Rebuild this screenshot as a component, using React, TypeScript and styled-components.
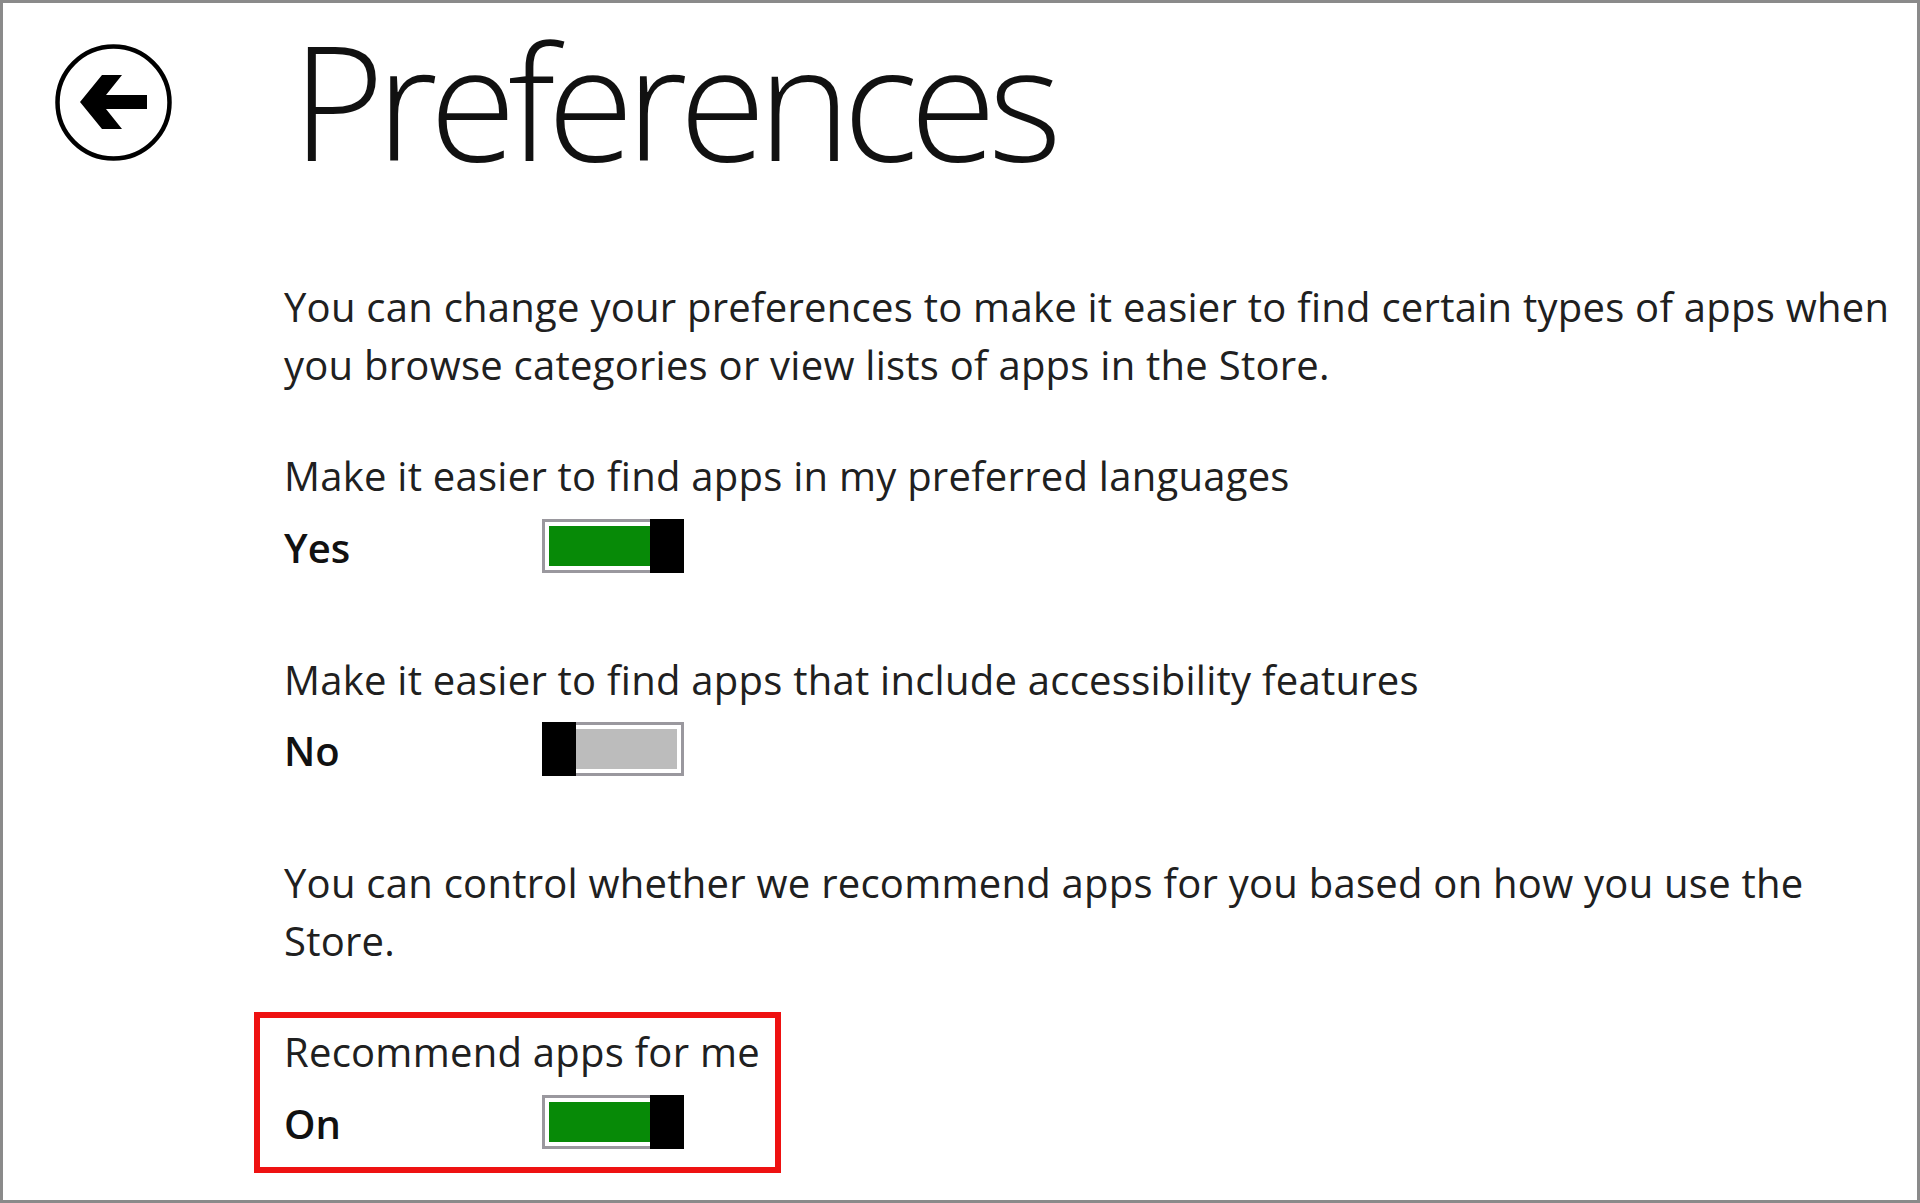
import React from "react";
import styled, { createGlobalStyle } from "styled-components";

const GlobalStyle = createGlobalStyle`
  html, body { margin: 0; padding: 0; background: #ffffff; }
  body { font-family: "Open Sans", "Noto Sans", sans-serif; }
`;

const Frame = styled.div`
  box-sizing: border-box;
  width: 1920px;
  height: 1203px;
  border: 3px solid #8a8a8a;
  background: #ffffff;
  color: #202020;
  overflow: hidden;
`;

const Header = styled.header`
  display: flex;
  align-items: flex-start;
  padding: 0 0 0 52px;
`;

const BackButton = styled.button`
  width: 117px;
  height: 117px;
  margin-top: 41px;
  padding: 0;
  border: none;
  background: transparent;
  cursor: pointer;
  flex: none;
  svg { display: block; }
`;

const Title = styled.h1`
  margin: 0 0 0 120px;
  font-family: "Open Sans", "Noto Sans", sans-serif;
  font-weight: 300;
  font-size: 158px;
  line-height: 193px;
  letter-spacing: -8.2px;
  color: #111;
  white-space: nowrap;
`;

const Content = styled.main`
  display: flex;
  flex-direction: column;
  align-items: flex-start;
  padding: 0 0 0 281px;
  margin-top: 82px;
`;

const Paragraph = styled.p`
  margin: 0;
  max-width: 1624px;
  font-size: 40px;
  line-height: 57.5px;
  letter-spacing: 0.25px;
`;

const Setting = styled.section<{ $highlight?: boolean }>`
  display: flex;
  flex-direction: column;
  gap: 14px;
  box-sizing: border-box;
  ${(p) =>
    p.$highlight
      ? `
    width: 527px;
    margin-left: -30px;
    padding: 5px 0 18px 24px;
    border: 6px solid #ee1111;
  `
      : ""}
`;

const Label = styled.div`
  font-size: 40px;
  line-height: 57.5px;
  letter-spacing: 0.25px;
  white-space: nowrap;
`;

const Row = styled.div`
  display: grid;
  grid-template-columns: 258px auto;
  align-items: start;
  height: 54px;
`;

const Value = styled.span`
  font-size: 40px;
  font-weight: 600;
  line-height: 57px;
  height: 54px;
  color: #111;
`;

const Track = styled.div`
  position: relative;
  box-sizing: border-box;
  width: 142px;
  height: 54px;
  border: 3px solid #9a989e;
  padding: 4px;
  background: #fff;
  display: flex;
`;

const Fill = styled.div<{ $on: boolean }>`
  flex: 1;
  ${(p) => (p.$on ? "margin-right: 27px;" : "margin-left: 27px;")}
  background: ${(p) => (p.$on ? "#078a07" : "#bcbcbc")};
`;

const Thumb = styled.div<{ $on: boolean }>`
  position: absolute;
  top: -3px;
  bottom: -3px;
  ${(p) => (p.$on ? "right: -3px;" : "left: -3px;")}
  width: 34px;
  background: #000;
`;

const Gap = styled.div<{ $h: number }>`
  height: ${(p) => p.$h}px;
  flex: none;
`;

function Toggle({ on }: { on: boolean }) {
  return (
    <Track role="switch" aria-checked={on}>
      <Fill $on={on} />
      <Thumb $on={on} />
    </Track>
  );
}

function BackIcon() {
  return (
    <svg width="117" height="117" viewBox="0 0 117 117">
      <circle cx="58.5" cy="58.5" r="56" fill="none" stroke="#000" strokeWidth="4.5" />
      <path
        d="M25 58 L47 31 L67 31 L51 51 L92 51 L92 65 L51 65 L67 85 L47 85 Z"
        fill="#000"
      />
    </svg>
  );
}

export default function App() {
  return (
    <>
      <GlobalStyle />
      <Frame>
        <Header>
          <BackButton aria-label="Back">
            <BackIcon />
          </BackButton>
          <Title>Preferences</Title>
        </Header>
        <Content>
          <Paragraph>
            You can change your preferences to make it easier to find certain types of apps when you
            browse categories or view lists of apps in the Store.
          </Paragraph>
          <Gap $h={54} />
          <Setting>
            <Label>Make it easier to find apps in my preferred languages</Label>
            <Row>
              <Value>Yes</Value>
              <Toggle on />
            </Row>
          </Setting>
          <Gap $h={78} />
          <Setting>
            <Label>Make it easier to find apps that include accessibility features</Label>
            <Row>
              <Value>No</Value>
              <Toggle on={false} />
            </Row>
          </Setting>
          <Gap $h={78} />
          <Paragraph>
            You can control whether we recommend apps for you based on how you use the Store.
          </Paragraph>
          <Gap $h={43} />
          <Setting $highlight>
            <Label>Recommend apps for me</Label>
            <Row>
              <Value>On</Value>
              <Toggle on />
            </Row>
          </Setting>
        </Content>
      </Frame>
    </>
  );
}
